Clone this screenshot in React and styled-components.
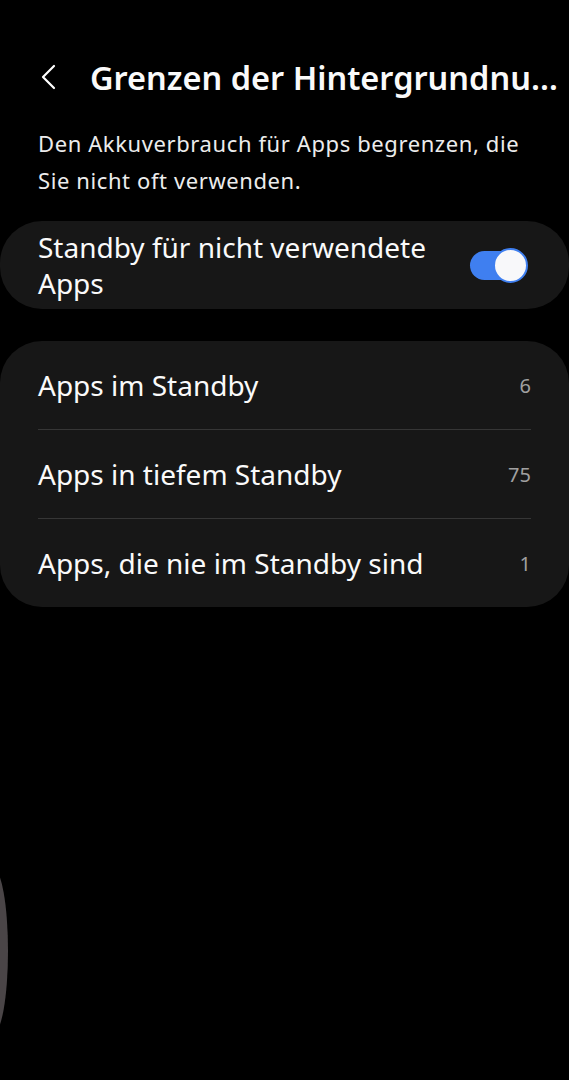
import React from 'react'
import styled, { createGlobalStyle } from 'styled-components'

const GlobalStyle = createGlobalStyle`
   html, body {
      margin:0;
      padding:0;
      background:#000;
   }
   body {
      font-family:"Noto Sans", "Open Sans", sans-serif;
      color:#fafafa;
   }
`

const Screen = styled.div`
   position:relative;
   width:569px;
   min-height:1080px;
   background:#000;
   overflow:hidden;
`

const Header = styled.header`
   display:flex;
   align-items:center;
   gap:32px;
   height:60px;
   margin-top:47px;
   padding:0 0 0 38px;
`

const BackButton = styled.button`
   display:flex;
   align-items:center;
   justify-content:center;
   flex-shrink:0;
   width:20px;
   height:30px;
   padding:0;
   border:none;
   background:none;
   color:#fff;
`

const Title = styled.h1`
   margin:0;
   min-width:0;
   flex:1;
   font-size:32.5px;
   font-weight:600;
   white-space:nowrap;
   overflow:hidden;
   text-overflow:ellipsis;
`

const Description = styled.p`
   margin:18px 38px 0;
   font-size:22px;
   letter-spacing:0.6px;
   line-height:37px;
   color:#ececec;
`

const Card = styled.section`
   margin-top:${p => p.$top}px;
   background:#171717;
   border-radius:42px;
`

const SwitchRow = styled.div`
   display:flex;
   align-items:center;
   justify-content:space-between;
   padding:8px 42px 8px 38px;
`

const SwitchLabel = styled.span`
   font-size:28px;
   line-height:36px;
   max-width:410px;
`

const Track = styled.span`
   position:relative;
   display:inline-block;
   width:57px;
   height:29px;
   border-radius:15px;
   background:#3f7ff0;
`

const Thumb = styled.span`
   position:absolute;
   right:-1px;
   top:-3px;
   width:31px;
   height:31px;
   border-radius:50%;
   background:#f8f8fa;
   border:2px solid #3f7ff0;
`

const Row = styled.div`
   display:flex;
   align-items:center;
   justify-content:space-between;
   height:88px;
   margin:0 38px;
   border-top:${p => p.$divider ? '1px solid #363636' : 'none'};
`

const RowLabel = styled.span`
   font-size:28px;
`

const Count = styled.span`
   font-size:20px;
   color:#a0a0a0;
`

const EdgeShade = styled.div`
   position:absolute;
   left:-22px;
   top:868px;
   width:30px;
   height:166px;
   border-radius:50%;
   background:#4a4547;
`

const rows = [
   { label: 'Apps im Standby', count: 6 },
   { label: 'Apps in tiefem Standby', count: 75 },
   { label: 'Apps, die nie im Standby sind', count: 1 },
]

const App = () => (
   <Screen>
      <GlobalStyle />
      <Header>
         <BackButton aria-label="Zurück">
            <svg width="16" height="26" viewBox="0 0 16 26" fill="none">
               <polyline points="14,2 3,13 14,24" stroke="#fff" strokeWidth="2.2" strokeLinecap="round" strokeLinejoin="round" />
            </svg>
         </BackButton>
         <Title>Grenzen der Hintergrundnutzung</Title>
      </Header>
      <Description>Den Akkuverbrauch für Apps begrenzen, die Sie nicht oft verwenden.</Description>
      <Card $top={22}>
         <SwitchRow>
            <SwitchLabel>Standby für nicht verwendete Apps</SwitchLabel>
            <Track><Thumb /></Track>
         </SwitchRow>
      </Card>
      <Card $top={32}>
         {rows.map((r, i) => (
            <Row key={r.label} $divider={i > 0}>
               <RowLabel>{r.label}</RowLabel>
               <Count>{r.count}</Count>
            </Row>
         ))}
      </Card>
      <EdgeShade />
   </Screen>
)

export default App
